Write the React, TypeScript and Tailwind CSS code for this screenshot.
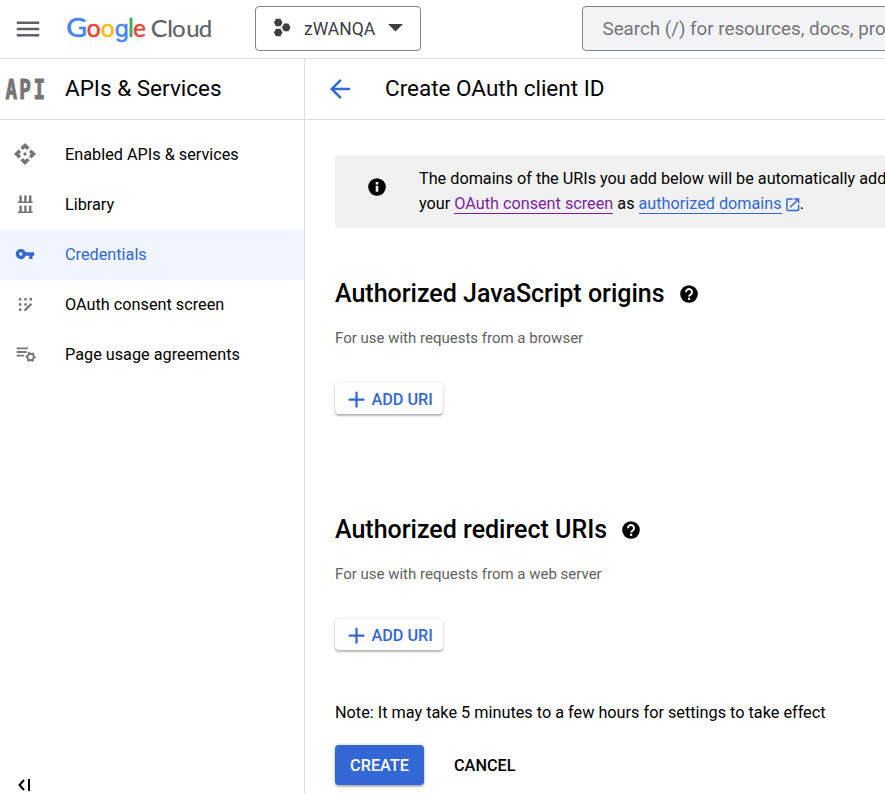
import type { ReactNode } from 'react';
import { MdAdd, MdApi, MdArrowBack, MdMenu, MdOpenInNew, MdVpnKey } from 'react-icons/md';

function GoogleCloudLogo() {
  return (
    <svg width="148" height="36" viewBox="66 10 148 36" className="block shrink-0 font-['Lato']" fontSize="24.5" strokeWidth=".5">
      <text transform="translate(66.2 36) scale(1.1 1)" fontSize="26" fill="#4285f4" stroke="#4285f4">G</text>
      <text x="86.8" y="36" fill="#ea4335" stroke="#ea4335">o</text>
      <text x="100.7" y="36" fill="#fbbc04" stroke="#fbbc04">o</text>
      <text x="114.8" y="36" fontSize="23" fill="#4285f4" stroke="#4285f4" className="font-['Inter']">g</text>
      <text x="128.1" y="36" fill="#34a853" stroke="#34a853">l</text>
      <text x="132.9" y="36" fill="#ea4335" stroke="#ea4335">e</text>
      <text transform="translate(150.7 36) scale(1.04 1)" fontSize="24" fill="#5f6368" stroke="#5f6368" strokeWidth=".2">C</text>
      <text y="36" x="167.3 172 186.2 198.8" fontSize="24" fill="#5f6368" stroke="#5f6368" strokeWidth=".2">loud</text>
    </svg>
  );
}

function ProjectIcon() {
  return (
    <svg width="18" height="20" viewBox="0 0 18 20" fill="#3c4043" className="shrink-0">
      <path d="M3 .7h4.4l2.1 3.8-2.1 3.8H3L.9 4.5z" />
      <path d="M3 10.7h4.4l2.1 3.8-2.1 3.8H3L.9 14.5z" />
      <path d="M11 5.6h4.4l2.1 3.8-2.1 3.8H11L8.9 9.4z" />
    </svg>
  );
}

function LibraryIcon() {
  return (
    <svg width="24" height="24" viewBox="0 0 24 24" fill="#757575">
      <path d="M5.8 2.6h2.4v6h2.4v-6H13v6h2.4v-6h2.4v6h1.3v1.6h-15V8.6h1.7zM5.8 12.6h2.4v6h2.4v-6H13v6h2.4v-6h2.4v6h1.3v1.6h-15v-1.6h1.7z" transform="translate(.6 .9)" />
    </svg>
  );
}

function ConsentIcon() {
  return (
    <svg width="24" height="24" viewBox="0 0 24 24" fill="#757575">
      <path d="M6 6h2.4v2.4H6zM11.3 6h2.4v2.4h-2.4zM16.6 6H19v2.4h-2.4zM6 11.3h2.4v2.4H6zM11.3 11.3h2.4v2.4h-2.4zM6 16.6h2.4V19H6z" />
      <path d="M11.3 19v-1.7l6.3-6.3 1.6 1.6-6.3 6.4z" />
    </svg>
  );
}

function AgreementsIcon() {
  return (
    <svg width="24" height="24" viewBox="0 0 24 24" fill="#757575">
      <path d="M3.7 5.5h11.2v1.8H3.7zM3.7 9.1h10v1.8h-10zM3.7 12.7h7.4v1.8H3.7z" />
      <g stroke="#757575" fill="none">
        <circle cx="17.6" cy="15" r="3.2" strokeWidth="1.9" />
        <circle cx="17.6" cy="15" r="4.5" strokeWidth="1.4" strokeDasharray="2.2 2.512" strokeDashoffset="1.1" />
      </g>
    </svg>
  );
}

function HelpIcon() {
  return (
    <svg width="18" height="18" viewBox="0 0 18 18" className="mb-px shrink-0">
      <circle cx="9" cy="9" r="8.8" />
      <path d="M6 7.2a3 3 0 1 1 4.7 2.3C9.6 10.2 9.1 10.5 9.1 11.6" fill="none" stroke="#fff" strokeWidth="2" />
      <path d="M8 12.7h2.2v2.2H8z" fill="#fff" />
    </svg>
  );
}

function NavItem({ icon, label, active }: { icon: ReactNode; label: string; active?: boolean }) {
  return (
    <a className={`flex h-[50px] items-center text-[16.25px] ${active ? 'bg-[#f0f5fe] text-[#3367d6]' : 'text-black'}`}>
      <span className="flex w-[65px] justify-center pr-[15px] pb-[2px]">{icon}</span>
      {label}
    </a>
  );
}

function UriSection({ title, hint }: { title: string; hint: string }) {
  return (
    <section className="h-[236px]">
      <h2 className="flex h-[38px] items-center gap-[15px] text-[25px] font-medium">
        {title}
        <HelpIcon />
      </h2>
      <p className="mt-[15px] h-[20px] text-[15px] leading-[20px] text-[#616161]">{hint}</p>
      <button className="mt-[35px] flex h-[31px] w-[108px] items-center rounded-[4px] bg-white pt-[2px] pl-[8px] text-[16.25px] font-medium whitespace-nowrap text-[#3367d6] shadow-[0_2px_2px_rgba(0,0,0,0.25),0_0_3px_rgba(0,0,0,0.15)]">
        <MdAdd size={27} className="mr-[1.4px] mb-px shrink-0" />
        <span className="pt-[2px]">ADD URI</span>
      </button>
    </section>
  );
}

export default function App() {
  return (
    <div className="flex h-[793px] w-[885px] flex-col overflow-hidden bg-white font-['Roboto',sans-serif] text-black">
      <header className="flex h-[59px] shrink-0 items-center border-b border-[#dadce0]">
        <div className="flex w-[255px] shrink-0 items-center pl-[13px]">
          <MdMenu size={30} color="#5f6368" className="mr-[23px] shrink-0" />
          <GoogleCloudLogo />
        </div>
        <button className="mb-[2px] flex h-[45px] w-[166px] shrink-0 items-center rounded-[4px] border border-[#80868b] pl-[17px] text-[17.5px] text-[#3c4043]">
          <ProjectIcon />
          <span className="mt-[2px] ml-[13px] w-[84px] text-left">zWANQA</span>
          <svg width="15" height="8" viewBox="0 0 15 8" fill="#3c4043" className="mb-px">
            <path d="M0 0h15L7.5 7.5z" />
          </svg>
        </button>
        <div className="mb-[2px] ml-[161px] flex h-[45px] w-[400px] shrink-0 items-center rounded-[4px] border border-[#80868b] bg-[#f1f3f4] pt-[2px] pl-[19.5px] text-[18.75px] whitespace-nowrap text-[#757575]">
          Search (/) for resources, docs, products, and more
        </div>
      </header>
      <div className="flex min-h-0 flex-1">
        <aside className="flex w-[305px] shrink-0 flex-col border-r border-[#dadce0]">
          <div className="flex h-[61px] shrink-0 items-center border-b border-[#dadce0]">
            <svg width="65" height="30" viewBox="0 0 65 30" fill="#757575" stroke="#757575" strokeWidth="1" className="font-['DejaVu_Sans_Mono'] font-bold">
              <text transform="translate(5.6 24.6) scale(.74 1)" x="0 18.6 37.8" fontSize="26">API</text>
            </svg>
            <h1 className="text-[22.5px]">APIs &amp; Services</h1>
          </div>
          <nav className="mt-[10px]">
            <NavItem icon={<MdApi size={24} color="#757575" />} label="Enabled APIs & services" />
            <NavItem icon={<LibraryIcon />} label="Library" />
            <NavItem icon={<MdVpnKey size={20} />} label="Credentials" active />
            <NavItem icon={<ConsentIcon />} label="OAuth consent screen" />
            <NavItem icon={<AgreementsIcon />} label="Page usage agreements" />
          </nav>
          <svg width="16" height="14" viewBox="0 0 16 14" className="mt-auto mb-px ml-[17px]" fill="none" stroke="#000" strokeWidth="2">
            <path d="M7 2L2.5 7 7 12M12 1v12" />
          </svg>
        </aside>
        <main className="min-w-0 flex-1">
          <div className="flex h-[61px] items-center border-b border-[#dadce0] pl-[20px]">
            <MdArrowBack size={30} color="#3367d6" className="mr-[30px]" />
            <h1 className="text-[22.5px]">Create OAuth client ID</h1>
          </div>
          <div className="pl-[30px]">
            <div className="mt-[35px] flex h-[73px] w-[700px] rounded-[4px] bg-[#f1f1f1]">
              <svg width="18" height="18" viewBox="0 0 18 18" className="mt-[23px] ml-[33px] shrink-0">
                <circle cx="9" cy="9" r="8.8" />
                <path d="M7.7 4.1h2.6v2.4H7.7zM7.7 7.8h2.6v6H7.7z" fill="#f1f1f1" />
              </svg>
              <p className="mt-[11px] ml-[33px] text-[16.23px] leading-[25px] whitespace-nowrap">
                The domains of the URIs you add below will be automatically added to
                <br />
                your <a className="border-b border-[#7b1fa2] text-[#7b1fa2]">OAuth consent screen</a> as{' '}
                <a className="border-b border-[#3367d6] text-[#3367d6]">authorized domains</a>
                <MdOpenInNew size={17.5} color="#3367d6" className="mr-[-1.5px] ml-[2px] inline align-[-4px]" />.
              </p>
            </div>
            <div className="mt-[47px]">
              <UriSection title="Authorized JavaScript origins" hint="For use with requests from a browser" />
              <UriSection title="Authorized redirect URIs" hint="For use with requests from a web server" />
            </div>
            <p className="-mt-[44px] text-[16.25px] leading-[20px]">Note: It may take 5 minutes to a few hours for settings to take effect</p>
            <div className="mt-[22px] flex items-center text-[16.25px] font-medium">
              <button className="h-[40px] w-[89px] rounded-[4px] bg-[#3367d6] pt-[2px] text-white shadow-[0_2px_2px_rgba(0,0,0,0.25),0_0_3px_rgba(0,0,0,0.2)]">CREATE</button>
              <button className="ml-[30px] pt-[2px]">CANCEL</button>
            </div>
          </div>
        </main>
      </div>
    </div>
  );
}
